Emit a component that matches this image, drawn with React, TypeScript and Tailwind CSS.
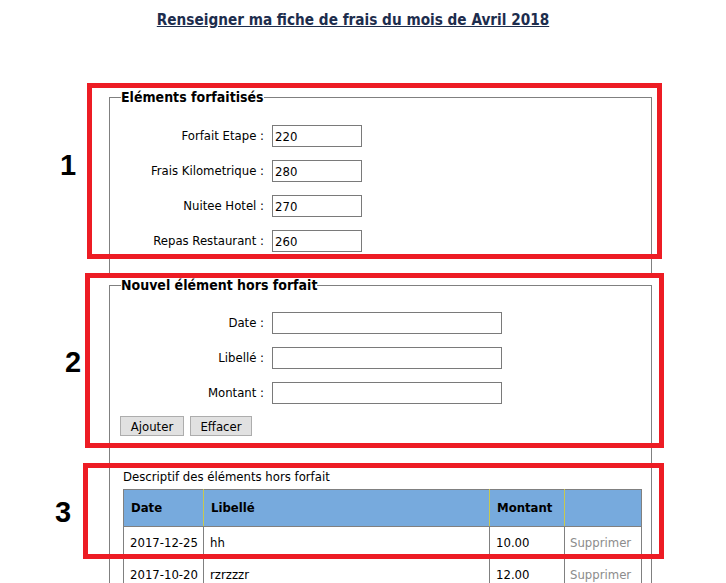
export default function App() {
  const forfaits = [
    { label: "Forfait Etape :", value: "220" },
    { label: "Frais Kilometrique :", value: "280" },
    { label: "Nuitee Hotel :", value: "270" },
    { label: "Repas Restaurant :", value: "260" },
  ]

  const champs = ["Date :", "Libellé :", "Montant :"]

  const lignes = [
    { date: "2017-12-25", libelle: "hh", montant: "10.00" },
    { date: "2017-10-20", libelle: "rzrzzzr", montant: "12.00" },
  ]

  return (
    <div className="relative h-[583px] w-[726px] overflow-hidden bg-white font-['DejaVu_Sans_Condensed','DejaVu_Sans',sans-serif] text-[13px] text-black">
      <h1 className="w-[706px] pt-[11px] text-center text-[15.2px] font-bold leading-[18px] text-[#1d2d4d] underline">
        Renseigner ma fiche de frais du mois de Avril 2018
      </h1>

      <fieldset className="ml-[109px] mt-[60px] w-[543px] border-x border-t border-[#808080] pb-[25px]">
        <legend className="ml-[11px] text-[14px] font-bold leading-[16px]">Eléments forfaitisés</legend>
        <div className="flex flex-col gap-[13px] pt-[20px]">
          {forfaits.map((f) => (
            <div key={f.label} className="flex items-center">
              <label className="w-[154px] text-right">{f.label}</label>
              <input
                defaultValue={f.value}
                className="ml-[8px] h-[22px] w-[90px] border border-[#7a7a7a] px-[2px] text-[13px] outline-none"
              />
            </div>
          ))}
        </div>
      </fieldset>

      <fieldset className="ml-[109px] w-[543px] border-x border-t border-[#808080] pb-[40px]">
        <legend className="ml-[11px] text-[14px] font-bold leading-[16px]">Nouvel élément hors forfait</legend>
        <div className="flex flex-col gap-[13px] pt-[19px]">
          {champs.map((c) => (
            <div key={c} className="flex items-center">
              <label className="w-[154px] text-right">{c}</label>
              <input className="ml-[8px] h-[22px] w-[230px] border border-[#7a7a7a] px-[2px] text-[13px] outline-none" />
            </div>
          ))}
        </div>
        <div className="ml-[10px] mt-[12px] flex gap-[6px]">
          <button className="h-[20px] w-[64px] border border-[#adadad] bg-[#e1e1e1] text-[13px] leading-none">Ajouter</button>
          <button className="h-[20px] w-[62px] border border-[#adadad] bg-[#e1e1e1] text-[13px] leading-none">Effacer</button>
        </div>

        <p className="ml-[13px] mt-[33px] leading-[16px]">Descriptif des éléments hors forfait</p>
        <table className="ml-[13px] mt-[4px] w-[518px] table-fixed border-collapse border border-[#808080]">
          <colgroup>
            <col className="w-[80px]" />
            <col className="w-[286px]" />
            <col className="w-[75px]" />
            <col className="w-[77px]" />
          </colgroup>
          <thead>
            <tr className="bg-[#77aadd]">
              <th className="h-[37px] border-b border-[#808080] px-[7px] text-left font-bold">Date</th>
              <th className="h-[37px] border-b border-l border-b-[#808080] border-l-[#c8c850] border-l-dotted px-[7px] text-left font-bold">Libellé</th>
              <th className="h-[37px] border-b border-l border-b-[#808080] border-l-[#c8c850] border-l-dotted px-[7px] text-left font-bold">Montant</th>
              <th className="h-[37px] border-b border-l border-b-[#808080] border-l-[#c8c850] border-l-dotted px-[7px] text-left font-bold"></th>
            </tr>
          </thead>
          <tbody>
            {lignes.map((l) => (
              <tr key={l.date}>
                <td className="h-[32px] whitespace-nowrap border border-[#808080] px-[6px]">{l.date}</td>
                <td className="h-[32px] whitespace-nowrap border border-[#808080] px-[6px]">{l.libelle}</td>
                <td className="h-[32px] whitespace-nowrap border border-[#808080] px-[6px]">{l.montant}</td>
                <td className="h-[32px] whitespace-nowrap border border-[#808080] px-[5px] text-[#8c8c8c]">Supprimer</td>
              </tr>
            ))}
          </tbody>
        </table>
      </fieldset>

      <div className="absolute left-[87px] top-[83px] h-[176px] w-[575px] border-[5px] border-[#ed1c24]" />
      <div className="absolute left-[85px] top-[273px] h-[175px] w-[579px] border-[5px] border-[#ed1c24]" />
      <div className="absolute left-[83px] top-[463px] h-[96px] w-[581px] border-[5px] border-[#ed1c24]" />

      <span className="absolute left-[60px] top-[151px] font-['Liberation_Sans',sans-serif] text-[29px] font-bold leading-none">1</span>
      <span className="absolute left-[65px] top-[348px] font-['Liberation_Sans',sans-serif] text-[29px] font-bold leading-none">2</span>
      <span className="absolute left-[55px] top-[498px] font-['Liberation_Sans',sans-serif] text-[29px] font-bold leading-none">3</span>
    </div>
  )
}
